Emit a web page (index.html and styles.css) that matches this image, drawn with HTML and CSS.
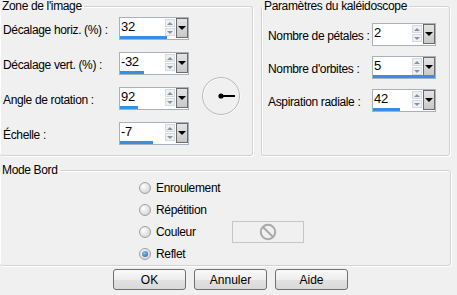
FILE: index.html
```html
<!DOCTYPE html>
<html lang="fr">
<head>
    <meta charset="UTF-8">
    <meta name="viewport" content="width=device-width, initial-scale=1.0">
    <title>Kaléidoscope</title>
    <link rel="stylesheet" href="styles.css">
</head>
<body>
    <div class="dialog">
        <div class="top">
            <fieldset class="group group-image">
                <legend>Zone de l'image</legend>
                <div class="rows rows-image">
                    <label class="label">Décalage horiz. (%) :</label>
                    <div class="spin">
                        <div class="spin-top">
                            <span class="value">32</span>
                            <span class="arrows"><span class="up"></span><span class="down"></span></span>
                            <span class="drop"></span>
                        </div>
                        <div class="bar" style="width: 69%"></div>
                    </div>

                    <label class="label">Décalage vert. (%) :</label>
                    <div class="spin">
                        <div class="spin-top">
                            <span class="value">-32</span>
                            <span class="arrows"><span class="up"></span><span class="down"></span></span>
                            <span class="drop"></span>
                        </div>
                        <div class="bar" style="width: 35%"></div>
                    </div>

                    <label class="label">Angle de rotation :</label>
                    <div class="spin">
                        <div class="spin-top">
                            <span class="value">92</span>
                            <span class="arrows"><span class="up"></span><span class="down"></span></span>
                            <span class="drop"></span>
                        </div>
                        <div class="bar" style="width: 27%"></div>
                    </div>

                    <label class="label">Échelle :</label>
                    <div class="spin">
                        <div class="spin-top">
                            <span class="value">-7</span>
                            <span class="arrows"><span class="up"></span><span class="down"></span></span>
                            <span class="drop"></span>
                        </div>
                        <div class="bar" style="width: 49%"></div>
                    </div>

                    <div class="dial">
                        <svg width="40" height="40" viewBox="0 0 40 40">
                            <circle cx="20.7" cy="20.7" r="18.5" fill="none" stroke="#ffffff"/>
                            <circle cx="20" cy="20" r="18.5" fill="none" stroke="#b8b8b8"/>
                            <line x1="20" y1="20" x2="34" y2="20" stroke="#000" stroke-width="2"/>
                            <circle cx="20" cy="20" r="2.6" fill="#000"/>
                        </svg>
                    </div>
                </div>
            </fieldset>

            <fieldset class="group group-kaleido">
                <legend>Paramètres du kaléidoscope</legend>
                <div class="rows rows-kaleido">
                    <label class="label">Nombre de pétales :</label>
                    <div class="spin spin-small">
                        <div class="spin-top">
                            <span class="value">2</span>
                            <span class="arrows"><span class="up"></span><span class="down"></span></span>
                            <span class="drop"></span>
                        </div>
                        <div class="bar" style="width: 0%"></div>
                    </div>

                    <label class="label">Nombre d'orbites :</label>
                    <div class="spin spin-small">
                        <div class="spin-top">
                            <span class="value">5</span>
                            <span class="arrows"><span class="up"></span><span class="down"></span></span>
                            <span class="drop"></span>
                        </div>
                        <div class="bar" style="width: 100%"></div>
                    </div>

                    <label class="label">Aspiration radiale :</label>
                    <div class="spin spin-small">
                        <div class="spin-top">
                            <span class="value">42</span>
                            <span class="arrows"><span class="up"></span><span class="down"></span></span>
                            <span class="drop"></span>
                        </div>
                        <div class="bar" style="width: 44%"></div>
                    </div>
                </div>
            </fieldset>
        </div>

        <fieldset class="group group-mode">
            <legend>Mode Bord</legend>
            <div class="choices">
                <label class="radio"><span class="dot"></span>Enroulement</label>
                <label class="radio"><span class="dot"></span>Répétition</label>
                <label class="radio"><span class="dot"></span>Couleur</label>
                <div class="swatch">
                    <svg width="18" height="18" viewBox="0 0 18 18">
                        <circle cx="9" cy="9" r="7.2" fill="none" stroke="#a9a9a9" stroke-width="2"/>
                        <line x1="4" y1="4" x2="14" y2="14" stroke="#a9a9a9" stroke-width="2"/>
                    </svg>
                </div>
                <label class="radio"><span class="dot checked"></span>Reflet</label>
            </div>
        </fieldset>

        <div class="buttons">
            <button class="button">OK</button>
            <button class="button">Annuler</button>
            <button class="button">Aide</button>
        </div>
    </div>
</body>
</html>
```

FILE: styles.css
```css
* {
    box-sizing: border-box;
}
body {
    margin: 0;
    background-color: #f0f0f0;
    font-family: "Liberation Sans", Arial, sans-serif;
    font-size: 12px;
    letter-spacing: -0.35px;
    color: #000;
}
.dialog {
    width: 451px;
}
.top {
    display: flex;
    gap: 8px;
}
.group {
    margin: 0;
    padding: 0;
    min-width: 0;
    border: 1px solid #d3d3d3;
    border-radius: 3px;
    box-shadow: 1px 1px 0 #fff, inset 1px 1px 0 #fff;
}
.group legend {
    padding: 0 2px;
    line-height: 13px;
}
.group-image {
    width: 253px;
    height: 156px;
    border-left: none;
}
.group-kaleido {
    width: 189px;
    height: 156px;
}
.group-mode {
    width: 451px;
    height: 102px;
    margin-top: 8px;
    border-left: none;
}
.rows {
    display: grid;
    grid-auto-rows: 23px;
    align-items: center;
}
.rows-image {
    grid-template-columns: 116px 70px 1fr;
    row-gap: 12px;
    padding: 4px 0 0 3px;
}
.rows-kaleido {
    grid-template-columns: 104px 64px;
    row-gap: 10px;
    padding: 10px 0 0 6px;
}
.label {
    grid-column: 1;
    padding-top: 2px;
    white-space: nowrap;
}
.spin {
    grid-column: 2;
    width: 70px;
    height: 23px;
    border: 1px solid #a9b0b8;
    background-color: #fff;
    display: flex;
    flex-direction: column;
}
.dial {
    grid-column: 3;
    grid-row: 2 / 5;
    justify-self: center;
    margin-bottom: 5px;
    height: 40px;
}
.spin-small {
    width: 64px;
}
.spin-top {
    display: flex;
    height: 18px;
}
.value {
    flex: 1;
    padding: 2px 0 0 1px;
    line-height: 14px;
    font-size: 13px;
}
.arrows {
    width: 11px;
    display: flex;
    flex-direction: column;
    gap: 1px;
    padding: 1px 1px 0 0;
}
.arrows span {
    flex: 1;
    background-color: #eef1f4;
    border: 1px solid #d5dae0;
    display: flex;
    align-items: center;
    justify-content: center;
}
.arrows .up::after {
    content: "";
    border-left: 3px solid transparent;
    border-right: 3px solid transparent;
    border-bottom: 3px solid #8593a3;
}
.arrows .down::after {
    content: "";
    border-left: 3px solid transparent;
    border-right: 3px solid transparent;
    border-top: 3px solid #8593a3;
}
.drop {
    width: 12px;
    height: 20px;
    border: 1px solid #6b6b6b;
    background: linear-gradient(#e4e4e4, #c8c8c8);
    display: flex;
    align-items: center;
    justify-content: center;
}
.drop::after {
    content: "";
    border-left: 4px solid transparent;
    border-right: 4px solid transparent;
    border-top: 4px solid #000;
}
.bar {
    height: 3px;
    margin-top: auto;
    background-color: #3a8de0;
}
.choices {
    display: grid;
    grid-template-columns: 93px 72px;
    grid-template-rows: repeat(4, 22px);
    padding-left: 139px;
}
.radio {
    grid-column: 1;
    display: flex;
    align-items: center;
    gap: 5px;
}
.dot {
    width: 12px;
    height: 12px;
    border-radius: 50%;
    border: 1px solid #a0a0a0;
    background: radial-gradient(circle at 35% 35%, #fff, #dedede 60%, #c9c9c9);
    display: flex;
    align-items: center;
    justify-content: center;
}
.dot.checked::after {
    content: "";
    width: 6px;
    height: 6px;
    border-radius: 50%;
    background: radial-gradient(circle at 40% 35%, #8cc2f2, #1c5699);
}
.swatch {
    grid-column: 2;
    grid-row: 3;
    border: 1px solid #c6c6c6;
    display: flex;
    align-items: center;
    justify-content: center;
}
.buttons {
    display: flex;
    gap: 8px;
    padding-left: 113px;
    margin-top: 3px;
}
.button {
    width: 73px;
    height: 21px;
    padding: 0;
    font: inherit;
    color: #000;
    border: 1px solid #707070;
    border-radius: 3px;
    background: linear-gradient(#fafafa, #ededed 50%, #e2e2e2 50%, #d9d9d9);
}
```
